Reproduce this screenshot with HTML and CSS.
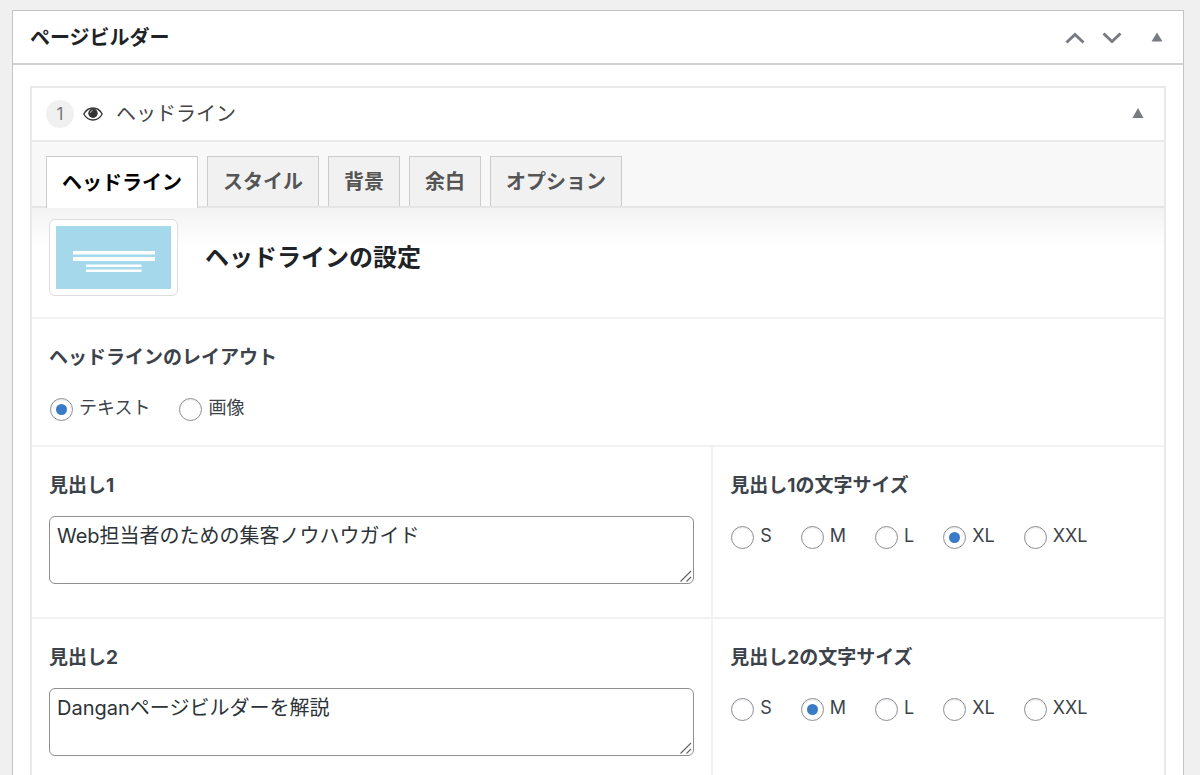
FILE: index.html
```html
<!DOCTYPE html>
<html lang="ja">
<head>
<meta charset="utf-8">
<meta name="viewport" content="width=device-width, initial-scale=1">
<title>ページビルダー</title>
<link rel="stylesheet" href="styles.css">
</head>
<body>
<section class="metabox">
  <header class="metabox-header">
    <h2 class="metabox-title">ページビルダー</h2>
    <div class="metabox-actions">
      <button type="button" class="icon-button" aria-label="上に移動"><svg width="20" height="12" viewBox="0 0 20 12"><path d="M1.500 10.500L10 2.500L18.500 10.500" fill="none" stroke="currentColor" stroke-width="3"/></svg></button>
      <button type="button" class="icon-button" aria-label="下に移動"><svg width="20" height="12" viewBox="0 0 20 12"><path d="M1.500 1.500L10 9.500L18.500 1.500" fill="none" stroke="currentColor" stroke-width="3"/></svg></button>
      <button type="button" class="icon-button icon-toggle" aria-label="パネルを切り替え"><svg width="12" height="12" viewBox="0 0 12 12"><path d="M6 0.500L11.500 9.500H0.500Z" fill="currentColor"/></svg></button>
    </div>
  </header>
  <div class="builder">
    <div class="widget-header">
      <span class="badge">1</span>
      <svg class="eye" width="20" height="14" viewBox="0 0 20 14"><path d="M0.800 7C3 3 6.300 1 10 1S17 3 19.200 7C17 11 13.700 13 10 13S3 11 0.800 7Z" fill="#fff" stroke="currentColor" stroke-width="1.300"/><circle cx="10" cy="6.200" r="4.700" fill="currentColor"/><path d="M7.500 5.800Q7.700 3.800 9.600 3.400" fill="none" stroke="#ccc" stroke-width="1"/></svg>
      <h3 class="widget-title">ヘッドライン</h3>
      <button type="button" class="icon-button" aria-label="ヘッドラインを開閉"><svg width="12" height="12" viewBox="0 0 12 12"><path d="M6 0L11.500 10H0.500Z" fill="currentColor"/></svg></button>
    </div>
    <div class="tabs" role="tablist">
      <button type="button" class="tab tab-active" role="tab" aria-selected="true">ヘッドライン</button>
      <button type="button" class="tab" role="tab" aria-selected="false">スタイル</button>
      <button type="button" class="tab" role="tab" aria-selected="false">背景</button>
      <button type="button" class="tab" role="tab" aria-selected="false">余白</button>
      <button type="button" class="tab" role="tab" aria-selected="false">オプション</button>
    </div>
    <div class="intro">
      <div class="thumb"><svg width="115" height="63" viewBox="0 0 115 63"><path d="M0 0H115V63H0Z" fill="#a4d8ea"/><path d="M17 25H99V28.500H17ZM17 31H99V35H17ZM30 38.500H85.500V41H30ZM30 43.500H85.500V46H30Z" fill="#fff"/></svg></div>
      <h4 class="intro-title">ヘッドラインの設定</h4>
    </div>
    <div class="field field-layout" role="radiogroup" aria-labelledby="layout-label">
      <div class="field-label" id="layout-label">ヘッドラインのレイアウト</div>
      <div class="radios">
        <label class="radio"><input type="radio" name="layout" checked><span>テキスト</span></label>
        <label class="radio"><input type="radio" name="layout"><span>画像</span></label>
      </div>
    </div>
    <div class="row">
      <div class="field">
        <label class="field-label" for="heading1">見出し1</label>
        <div class="textarea-wrap">
          <textarea class="textarea" id="heading1" rows="2">Web担当者のための集客ノウハウガイド</textarea>
          <svg class="grip" width="12" height="12" viewBox="0 0 12 12"><path d="M0.500 11.500L11 1M6.500 11.500L11 7" fill="none" stroke="#666" stroke-width="1.200"/></svg>
        </div>
      </div>
      <div class="field field-side" role="radiogroup" aria-labelledby="size1-label">
        <div class="field-label" id="size1-label">見出し1の文字サイズ</div>
        <div class="radios">
          <label class="radio"><input type="radio" name="size1"><span>S</span></label>
          <label class="radio"><input type="radio" name="size1"><span>M</span></label>
          <label class="radio"><input type="radio" name="size1"><span>L</span></label>
          <label class="radio"><input type="radio" name="size1" checked><span>XL</span></label>
          <label class="radio"><input type="radio" name="size1"><span>XXL</span></label>
        </div>
      </div>
    </div>
    <div class="row">
      <div class="field">
        <label class="field-label" for="heading2">見出し2</label>
        <div class="textarea-wrap">
          <textarea class="textarea" id="heading2" rows="2">Danganページビルダーを解説</textarea>
          <svg class="grip" width="12" height="12" viewBox="0 0 12 12"><path d="M0.500 11.500L11 1M6.500 11.500L11 7" fill="none" stroke="#666" stroke-width="1.200"/></svg>
        </div>
      </div>
      <div class="field field-side" role="radiogroup" aria-labelledby="size2-label">
        <div class="field-label" id="size2-label">見出し2の文字サイズ</div>
        <div class="radios">
          <label class="radio"><input type="radio" name="size2"><span>S</span></label>
          <label class="radio"><input type="radio" name="size2" checked><span>M</span></label>
          <label class="radio"><input type="radio" name="size2"><span>L</span></label>
          <label class="radio"><input type="radio" name="size2"><span>XL</span></label>
          <label class="radio"><input type="radio" name="size2"><span>XXL</span></label>
        </div>
      </div>
    </div>
  </div>
</section>
</body>
</html>
```
FILE: styles.css
```css
* { box-sizing: border-box; }

body {
  margin: 0;
  padding: 10px 16px 0 12px;
  background: #f0f0f1;
  color: #3c434a;
  font-family: Inter, "Noto Sans CJK JP", sans-serif;
  font-size: 19px;
  line-height: 26px;
}

h2, h3, h4 { margin: 0; }
button, textarea, input { font: inherit; }
svg { display: block; }

.metabox {
  background: #fff;
  border: 1px solid #c3c4c7;
}

.metabox-header {
  display: flex;
  align-items: center;
  justify-content: space-between;
  height: 54px;
  padding: 2px 20px 0 17px;
  border-bottom: 2px solid #d0d1d3;
}

.metabox-title {
  font-size: 20px;
  font-weight: 700;
  color: #1d2327;
}

.metabox-actions {
  display: flex;
  align-items: center;
  gap: 17px;
}

.icon-button {
  padding: 0;
  border: 0;
  background: none;
  color: #787c82;
}

.icon-toggle { margin-left: 12px; }

.builder {
  margin: 21px 17px;
  border: 2px solid #e9e9e9;
}

.widget-header {
  display: flex;
  align-items: center;
  height: 54px;
  padding: 0 20px 0 14px;
  border-bottom: 2px solid #e9e9e9;
}

.badge {
  width: 28px;
  height: 28px;
  border-radius: 50%;
  background: #f0f0f0;
  color: #777;
  font-size: 17px;
  line-height: 28px;
  text-align: center;
}

.eye {
  margin: 0 13px 0 9px;
  color: #333;
}

.widget-title {
  flex: 1;
  font-size: 20px;
  font-weight: 400;
  color: #444;
}

.tabs {
  display: flex;
  gap: 9px;
  padding: 14px 14px 0;
  border-bottom: 2px solid #e5e5e5;
  background: #f8f8f8;
}

.tab {
  height: 50px;
  padding: 0 15px;
  border: 1px solid #ccc;
  border-bottom: 0;
  background: #f1f1f1;
  color: #555;
  font-size: 20px;
  font-weight: 700;
}

.tab-active {
  height: 52px;
  margin-bottom: -2px;
  background: #fff;
  color: #000;
}

.intro {
  display: flex;
  align-items: center;
  gap: 27px;
  padding: 11px 17px 21px;
  background: linear-gradient(#f3f3f3, #fff 40px);
}

.thumb {
  padding: 6px;
  border: 1px solid #ddd;
  border-radius: 6px;
  background: #fff;
}

.intro-title {
  font-size: 24px;
  font-weight: 700;
  line-height: 34px;
  color: #1d2327;
}

.field {
  min-width: 0;
  padding: 26px 17px 33px;
}

.field-layout {
  padding-bottom: 24px;
  border-top: 2px solid #f2f2f2;
}

.field-side { border-left: 2px solid #f2f2f2; }

.field-label {
  display: block;
  font-weight: 700;
}

.row {
  display: grid;
  grid-template-columns: 3fr 2fr;
  border-top: 2px solid #f2f2f2;
}

.textarea-wrap {
  position: relative;
  margin-top: 17px;
}

.textarea {
  display: block;
  width: 100%;
  height: 68px;
  padding: 5px 7px;
  border: 1px solid #8c8f94;
  border-radius: 6px;
  background: #fff;
  color: #2c3338;
  font-size: 20px;
  line-height: 28px;
  resize: vertical;
}

.textarea::-webkit-resizer { background: transparent; }

.grip {
  position: absolute;
  right: 2px;
  bottom: 2px;
  pointer-events: none;
}

.radios {
  display: flex;
  flex-wrap: wrap;
  gap: 28px;
  margin-top: 24px;
}

.radio {
  display: flex;
  align-items: center;
  gap: 6px;
  font-size: 18px;
}

.radio input {
  display: grid;
  place-items: center;
  width: 23px;
  height: 23px;
  margin: 2px 0 0 1px;
  border: 1px solid #8c8f94;
  border-radius: 50%;
  background: #fff;
  box-shadow: inset 0 1px 2px rgba(0, 0, 0, 0.1);
  appearance: none;
}

.radio input:checked::before {
  content: "";
  width: 11px;
  height: 11px;
  border-radius: 50%;
  background: #3a7bc8;
}
```
